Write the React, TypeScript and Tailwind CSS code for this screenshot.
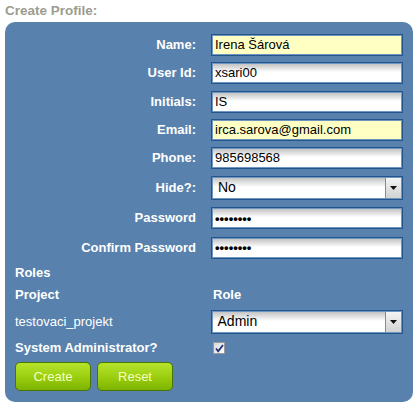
import { ReactNode } from "react";

const font = { fontFamily: '"Liberation Sans", Arial, sans-serif' };

function Label({ children }: { children: ReactNode }) {
  return (
    <div className="w-[182px] shrink-0 pr-[1px] text-right text-[13px] font-bold text-white">
      {children}
    </div>
  );
}

function TextBox({
  value,
  yellow,
  password,
}: {
  value: string;
  yellow?: boolean;
  password?: boolean;
}) {
  return (
    <div className="ml-[14px] h-[22px] w-[193px] border border-[#23548c] bg-[#6f96c0] p-[1px]">
      <div
        className={
          "flex h-full items-center px-[2px] text-[13px] text-black " +
          (yellow
            ? "bg-[#ffffc4]"
            : "bg-gradient-to-b from-[#c4c4c4] via-white via-45% to-white")
        }
      >
        {password ? (
          <span className="text-[13px] font-bold leading-none">••••••••</span>
        ) : (
          value
        )}
      </div>
    </div>
  );
}

function SelectBox({ value }: { value: string }) {
  return (
    <div className="ml-[14px] h-[24px] w-[193px] border border-[#23548c] bg-[#6f96c0] p-[1px]">
      <div className="flex h-full items-stretch bg-gradient-to-b from-[#c4c4c4] via-white via-45% to-white">
        <div className="flex flex-1 items-center px-[5px] text-[14px] text-black">
          {value}
        </div>
        <div className="flex w-[16px] items-center justify-center border-l border-[#8a8a8a] bg-gradient-to-b from-[#f4f4f4] to-[#d2d2d2]">
          <svg width="7" height="4" viewBox="0 0 7 4">
            <path d="M0 0h7L3.5 4z" fill="#111" />
          </svg>
        </div>
      </div>
    </div>
  );
}

function Row({ h, children }: { h: string; children: ReactNode }) {
  return <div className={"flex items-center " + h}>{children}</div>;
}

export default function App() {
  return (
    <div className="h-[410px] w-[420px] bg-white pl-[5px]" style={font}>
      <div className="h-[22px] pt-[1px] text-[13.5px] font-bold text-[#9c9c90]">
        Create Profile:
      </div>
      <div className="w-[408px] rounded-[10px] bg-[#5882ad] px-[10px] pb-[11px] pt-[8px]">
        <Row h="h-[29px]">
          <Label>Name:</Label>
          <TextBox value="Irena Šárová" yellow />
        </Row>
        <Row h="h-[28px]">
          <Label>User Id:</Label>
          <TextBox value="xsari00" />
        </Row>
        <Row h="h-[29px]">
          <Label>Initials:</Label>
          <TextBox value="IS" />
        </Row>
        <Row h="h-[28px]">
          <Label>Email:</Label>
          <TextBox value="irca.sarova@gmail.com" yellow />
        </Row>
        <Row h="h-[28px]">
          <Label>Phone:</Label>
          <TextBox value="985698568" />
        </Row>
        <Row h="h-[31px]">
          <Label>Hide?:</Label>
          <SelectBox value="No" />
        </Row>
        <Row h="h-[30px]">
          <Label>Password</Label>
          <TextBox value="" password />
        </Row>
        <Row h="h-[29px]">
          <Label>Confirm Password</Label>
          <TextBox value="" password />
        </Row>
        <Row h="h-[22px]">
          <div className="text-[13px] font-bold text-white">Roles</div>
        </Row>
        <Row h="h-[22px]">
          <div className="w-[198px] text-[13px] font-bold text-white">Project</div>
          <div className="text-[13px] font-bold text-white">Role</div>
        </Row>
        <Row h="h-[31px]">
          <div className="w-[182px] text-[13px] text-white">testovaci_projekt</div>
          <SelectBox value="Admin" />
        </Row>
        <Row h="h-[22px]">
          <div className="w-[198px] text-[13px] font-bold text-white">
            System Administrator?
          </div>
          <div className="flex h-[12px] w-[12px] items-center justify-center border border-[#9a9a9a] bg-gradient-to-br from-[#d8d8d8] to-white">
            <svg width="9" height="9" viewBox="0 0 9 9">
              <path
                d="M1 4.5l2.2 2.8L8 1"
                fill="none"
                stroke="#25307a"
                strokeWidth="1.8"
              />
            </svg>
          </div>
        </Row>
        <div className="mt-[3px] flex gap-[6px]">
          <button className="h-[29px] w-[76px] rounded-[5px] border border-[#4a7400] bg-gradient-to-b from-[#b6e42a] via-[#9ccf10] to-[#7db300] text-[13px] text-[#f3ffc0]">
            Create
          </button>
          <button className="h-[29px] w-[76px] rounded-[5px] border border-[#4a7400] bg-gradient-to-b from-[#b6e42a] via-[#9ccf10] to-[#7db300] text-[13px] text-[#f3ffc0]">
            Reset
          </button>
        </div>
      </div>
    </div>
  );
}
